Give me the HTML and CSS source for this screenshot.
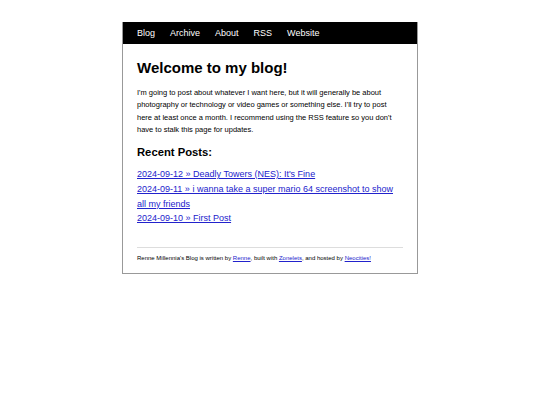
FILE: index.html
```html
<!DOCTYPE html>
<html lang="en">
<head>
<meta charset="utf-8">
<title>Renne Millennia's Blog</title>
<link rel="stylesheet" href="styles.css">
</head>
<body>
<div class="container">
  <nav class="nav">
    <a href="#">Blog</a>
    <a href="#">Archive</a>
    <a href="#">About</a>
    <a href="#">RSS</a>
    <a href="#">Website</a>
  </nav>
  <main class="content">
    <h1 class="title">Welcome to my blog!</h1>
    <p class="intro">I'm going to post about whatever I want here, but it will generally be about photography or technology or video games or something else. I'll try to post here at least once a month. I recommend using the RSS feature so you don't have to stalk this page for updates.</p>
    <h2 class="subtitle">Recent Posts:</h2>
    <ul class="posts">
      <li><a href="#">2024-09-12 &raquo; Deadly Towers (NES): It's Fine</a></li>
      <li><a href="#">2024-09-11 &raquo; i wanna take a super mario 64 screenshot to show all my friends</a></li>
      <li><a href="#">2024-09-10 &raquo; First Post</a></li>
    </ul>
    <footer class="footer">
      <hr class="rule">
      <p class="credits">Renne Millennia's Blog is written by <a href="#">Renne</a>, built with <a href="#">Zonelets</a>, and hosted by <a href="#">Neocities!</a></p>
    </footer>
  </main>
</div>
</body>
</html>
```

FILE: styles.css
```css
html, body {
  margin: 0;
  padding: 0;
  background: #fff;
}
body {
  font-family: "Liberation Sans", Arial, sans-serif;
  font-size: 7.5px;
  line-height: 1.6;
  color: #000;
}
.container {
  width: 294px;
  margin: 22px auto 0;
  border: 1px solid #999;
  border-top: none;
}
.nav {
  display: flex;
  align-items: center;
  gap: 15px;
  height: 22px;
  box-sizing: border-box;
  padding: 1px 14px 0;
  background: #000;
}
.nav a {
  color: #fff;
  text-decoration: none;
  font-size: 9px;
  line-height: 1;
}
.content {
  padding: 0 14px 1px;
}
.title {
  font-size: 15px;
  line-height: 17px;
  margin: 15px 0 11px;
}
.intro {
  margin: 0;
  line-height: 12.3px;
}
.subtitle {
  font-size: 11.25px;
  line-height: 13px;
  margin: 10px 0 8px;
}
.posts {
  list-style: none;
  margin: 0;
  padding: 0;
  font-size: 9px;
  line-height: 14.7px;
}
.posts a, .credits a {
  color: #2222cc;
}
.footer {
  margin-top: 21px;
}
.rule {
  border: none;
  border-top: 1px solid #ddd;
  margin: 0 0 6px;
}
.credits {
  font-size: 6px;
  margin: 0 0 8px;
}
```
